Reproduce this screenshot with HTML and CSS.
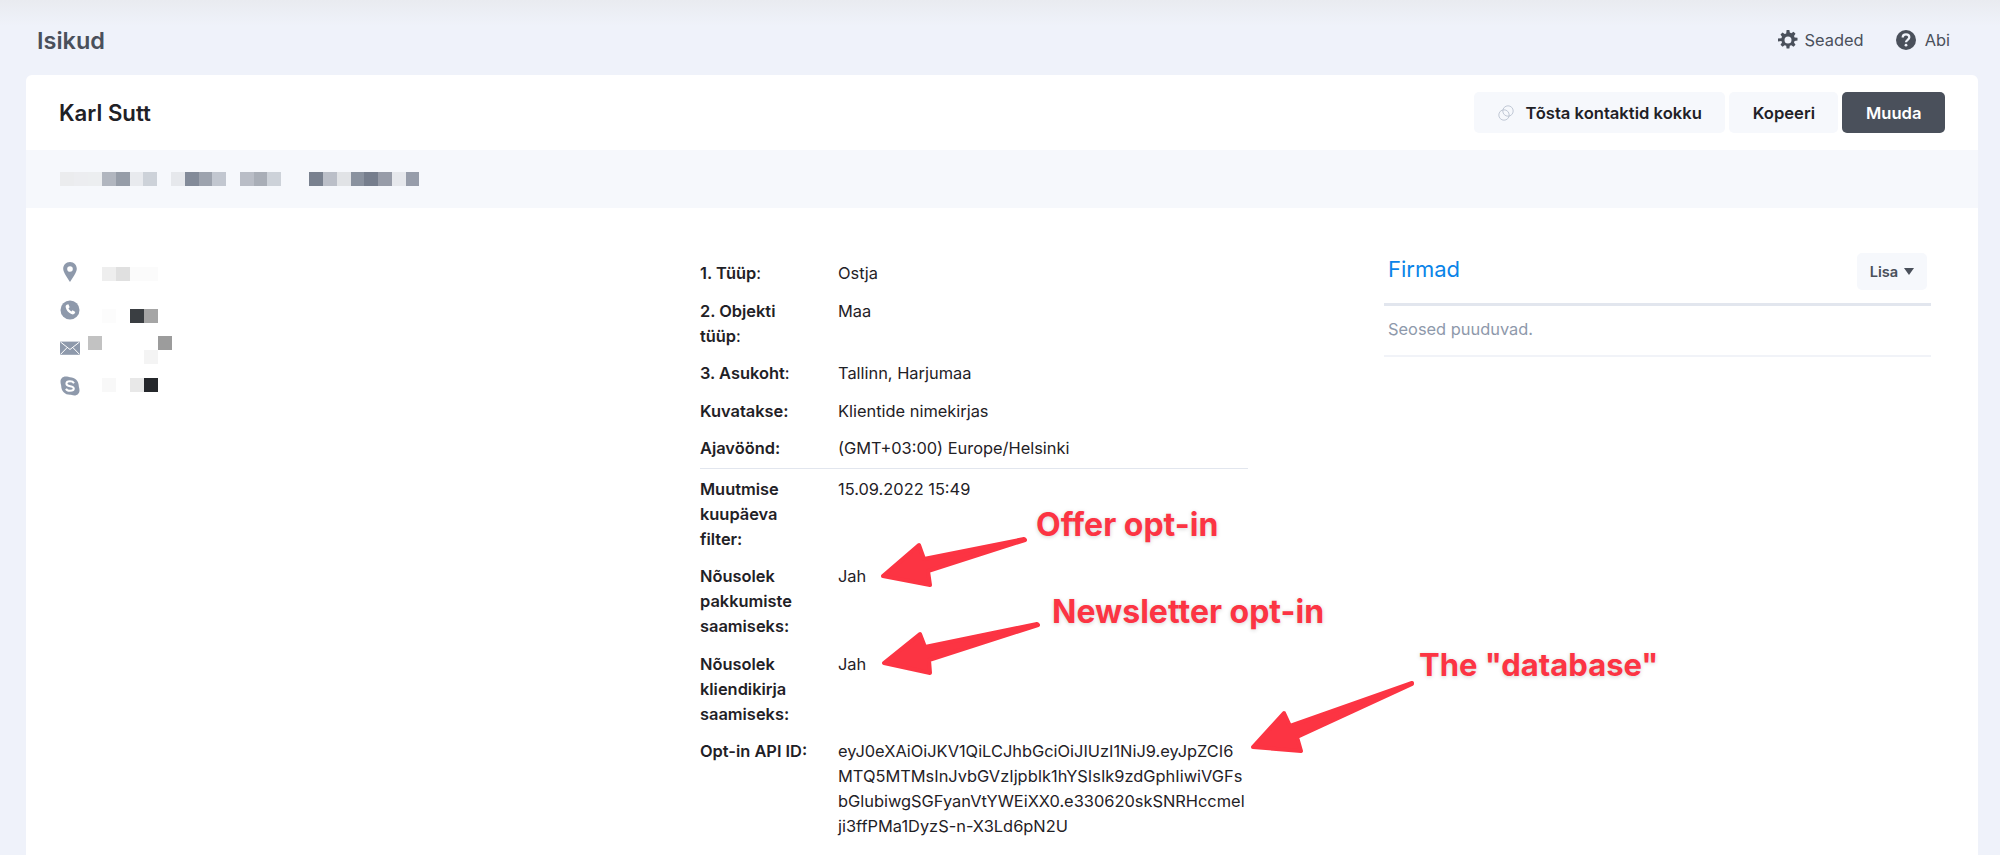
FILE: index.html
```html
<!DOCTYPE html>
<html lang="en">
<head>
    <meta charset="UTF-8">
    <meta name="viewport" content="width=device-width, initial-scale=1.0">
    <title>Isikud</title>
    <link rel="stylesheet" href="styles.css">
</head>
<body>
    <header class="topbar">
        <div class="page-title">Isikud</div>
        <nav class="top-links">
            <a class="top-link link-settings">
                <svg class="top-icon" viewBox="0 0 20 20"><path fill="#4a505b" fill-rule="evenodd" d="M8.600 0h2.800l.4 2.600 1.500.6 2.200-1.500 2 2-1.500 2.200.6 1.500 2.900.4v2.800l-2.900.4-.6 1.500 1.500 2.200-2 2-2.200-1.500-1.500.6-.4 2.700H8.600l-.4-2.700-1.500-.6-2.200 1.500-2-2 1.500-2.200-.6-1.500L0 11.400V8.600l3.400-.4.6-1.500-1.500-2.200 2-2 2.200 1.500 1.500-.6zM10 6.500a3.500 3.500 0 1 0 0 7 3.500 3.500 0 0 0 0-7z"/></svg>
                Seaded
            </a>
            <a class="top-link">
                <svg class="top-icon" viewBox="0 0 20 20"><circle cx="10" cy="10" r="10" fill="#4a505b"/><path fill="none" stroke="#eff2fa" stroke-width="2.300" d="M6.700 7.600c0-2 1.500-3.200 3.300-3.200s3.300 1.100 3.300 2.900c0 2.500-3.300 2.500-3.300 5"/><circle cx="10" cy="15.200" r="1.400" fill="#eff2fa"/></svg>
                Abi
            </a>
        </nav>
    </header>

    <main class="card">
        <div class="card-head">
            <h1>Karl Sutt</h1>
            <div class="actions">
                <button class="btn">
                    <svg class="merge-icon" viewBox="0 0 16 16"><g fill="none" stroke="#b4bccb" stroke-width="0.800"><circle cx="6" cy="10" r="5.200"/><circle cx="10" cy="6" r="5.200"/></g></svg>
                    Tõsta kontaktid kokku
                </button>
                <button class="btn">Kopeeri</button>
                <button class="btn btn-dark">Muuda</button>
            </div>
        </div>
        <div class="band">
            <svg class="band-blur" viewBox="0 0 360 14" shape-rendering="crispEdges">
                <rect x="0" width="14" height="14" fill="#ebecee"/>
                <rect x="14" width="14" height="14" fill="#ecedf0"/>
                <rect x="28" width="14" height="14" fill="#eceef0"/>
                <rect x="42" width="14" height="14" fill="#b1b6bf"/>
                <rect x="56" width="14" height="14" fill="#969da8"/>
                <rect x="70" width="13" height="14" fill="#e8eaee"/>
                <rect x="83" width="14" height="14" fill="#cdd2d9"/>
                <rect x="111" width="14" height="14" fill="#e6e8ec"/>
                <rect x="125" width="14" height="14" fill="#838b99"/>
                <rect x="139" width="13" height="14" fill="#9da3ae"/>
                <rect x="152" width="14" height="14" fill="#c2c7d0"/>
                <rect x="180" width="14" height="14" fill="#b9bdc6"/>
                <rect x="194" width="13" height="14" fill="#a9aeb7"/>
                <rect x="207" width="14" height="14" fill="#cdd2d9"/>
                <rect x="249" width="14" height="14" fill="#79818f"/>
                <rect x="263" width="14" height="14" fill="#bbbfc8"/>
                <rect x="277" width="14" height="14" fill="#e1e3e6"/>
                <rect x="291" width="13" height="14" fill="#8a929f"/>
                <rect x="304" width="14" height="14" fill="#767e8d"/>
                <rect x="318" width="14" height="14" fill="#979ca8"/>
                <rect x="332" width="14" height="14" fill="#e6e8ec"/>
                <rect x="346" width="13" height="14" fill="#979daa"/>
            </svg>
        </div>

        <div class="card-body">
            <section class="contact">
                <div class="contact-icons">
                    <svg class="contact-icon" viewBox="0 0 20 20"><path fill="#8e99ab" fill-rule="evenodd" d="M10 0C5.900 0 3.200 3 3.200 6.800 3.200 10.500 7.500 16 10 20c2.500-4 6.800-9.500 6.800-13.200C16.800 3 14.100 0 10 0zm0 4.200a2.800 2.800 0 1 1 0 5.600 2.800 2.800 0 0 1 0-5.600z"/></svg>
                    <svg class="contact-icon" viewBox="0 0 20 20"><circle cx="10" cy="10" r="9.500" fill="#8e99ab"/><path fill="#fff" d="M6.700 4.700l1.700-.5 1.300 3-1.200 1c.5 1.300 1.500 2.500 2.900 3.200l1.200-1.100 2.700 1.600-.7 1.700c-.6.900-2 1-3.300.4-3-1.300-5.100-3.800-5.600-6.700-.2-1.100.2-2 1-2.600z"/></svg>
                    <svg class="contact-icon" viewBox="0 0 20 20"><path fill="#8e99ab" d="M0 3.600h20v13.200H0z"/><path fill="none" stroke="#fff" stroke-width="1" d="M.5 4l9.500 7.500L19.500 4M.5 16.400l6.800-7M19.500 16.400l-6.800-7"/></svg>
                    <svg class="contact-icon" viewBox="0 0 20 20"><path fill="#8e99ab" d="M5.500 0.500C8 0.500 8.600 1.200 10 1.200c5 0 8.800 3.800 8.800 8.800 0 1.300.7 2.200.7 4.500 0 2.800-2.200 5-5 5-2.300 0-3.200-.7-4.500-.7-5 0-8.800-3.800-8.800-8.800C1.200 8.600.5 8 .5 5.500c0-2.800 2.200-5 5-5z"/><path fill="none" stroke="#fff" stroke-width="2" d="M14 7.200C13.200 5.800 11.800 5.300 10 5.300c-2 0-3.600.8-3.600 2.400 0 3.400 7.400 1.600 7.400 4.800 0 1.500-1.700 2.300-3.800 2.300-1.800 0-3.300-.7-4-2.100"/></svg>
                </div>
                <svg class="contact-blur" viewBox="0 0 84 126" shape-rendering="crispEdges">
                    <rect x="14" y="0" width="14" height="14" fill="#eeeeee"/>
                    <rect x="28" y="0" width="14" height="14" fill="#e0e0e0"/>
                    <rect x="42" y="0" width="28" height="14" fill="#fbfbfb"/>
                    <rect x="14" y="42" width="14" height="14" fill="#fcfcfc"/>
                    <rect x="42" y="42" width="14" height="14" fill="#3a3e42"/>
                    <rect x="56" y="42" width="14" height="14" fill="#a5a5a5"/>
                    <rect x="0" y="69" width="14" height="14" fill="#c2c2c2"/>
                    <rect x="70" y="69" width="14" height="14" fill="#9c9c9c"/>
                    <rect x="56" y="83" width="14" height="14" fill="#f4f4f4"/>
                    <rect x="14" y="111" width="14" height="14" fill="#f8f8f8"/>
                    <rect x="42" y="111" width="14" height="14" fill="#e8e8e8"/>
                    <rect x="56" y="111" width="14" height="14" fill="#25272b"/>
                </svg>
            </section>

            <section class="details">
                <div class="row"><div class="label">1. Tüüp<span class="colon">:</span></div><div class="value">Ostja</div></div>
                <div class="row"><div class="label">2. Objekti tüüp<span class="colon">:</span></div><div class="value">Maa</div></div>
                <div class="row"><div class="label">3. Asukoht<span class="colon">:</span></div><div class="value">Tallinn, Harjumaa</div></div>
                <div class="row"><div class="label">Kuvatakse:</div><div class="value">Klientide nimekirjas</div></div>
                <div class="row"><div class="label">Ajavöönd:</div><div class="value">(GMT+03:00) Europe/Helsinki</div></div>
                <div class="row row-split"><div class="label">Muutmise kuupäeva filter:</div><div class="value">15.09.2022 15:49</div></div>
                <div class="row"><div class="label">Nõusolek pakkumiste saamiseks:</div><div class="value">Jah</div></div>
                <div class="row"><div class="label">Nõusolek kliendikirja saamiseks:</div><div class="value">Jah</div></div>
                <div class="row"><div class="label">Opt-in API ID:</div><div class="value value-token">eyJ0eXAiOiJKV1QiLCJhbGciOiJIUzI1NiJ9.eyJpZCI6MTQ5MTMsInJvbGVzIjpbIk1hYSIsIk9zdGphIiwiVGFsbGlubiwgSGFyanVtYWEiXX0.e330620skSNRHccmelji3ffPMa1DyzS-n-X3Ld6pN2U</div></div>
            </section>

            <aside class="side">
                <div class="side-head">
                    <h2>Firmad</h2>
                    <button class="btn-small">Lisa <span class="caret"></span></button>
                </div>
                <p class="side-empty">Seosed puuduvad.</p>
            </aside>
        </div>
    </main>

    <!-- annotations on top of the screenshot -->
    <svg class="arrows" viewBox="0 0 2000 855">
        <path d="M883 576 L919 545 L924 559 L1024 539 L1025 540 L928 571 L930 585 Z"/>
        <path d="M884 663 L920 634 L925 647 L1037 624 L1038 625 L929 660 L930 673 Z"/>
        <path d="M1253 747 L1284 713 L1290 726 L1412 683 L1412 684 L1297 737 L1301 751 Z"/>
    </svg>
    <div class="note note-offer">Offer opt-in</div>
    <div class="note note-news">Newsletter opt-in</div>
    <div class="note note-db">The "database"</div>
</body>
</html>
```

FILE: styles.css
```css
html, body {
    margin: 0;
    padding: 0;
}
body {
    position: relative;
    height: 855px;
    overflow: hidden;
    background: linear-gradient(#e9ebf0, #eff2fa 26px);
    font-family: Inter, "Liberation Sans", sans-serif;
    font-size: 16.4px;
    color: #1f2126;
}
.topbar {
    height: 75px;
    padding: 0 50px 0 37px;
    display: flex;
    align-items: center;
    justify-content: space-between;
}
.page-title {
    font-size: 23.5px;
    font-weight: 600;
    color: #4a505b;
    margin-top: 6px;
}
.top-links {
    display: flex;
    gap: 32px;
    margin-top: 4px;
}
.top-link {
    display: flex;
    align-items: center;
    gap: 9px;
    color: #4a505b;
}
.link-settings {
    gap: 7px;
}
.top-icon {
    width: 20px;
    height: 20px;
}
.card {
    margin: 0 22px 0 26px;
    height: 780px;
    background: #fff;
    border-radius: 6px 6px 0 0;
}
.card-head {
    height: 75px;
    padding: 0 33px;
    display: flex;
    align-items: center;
    justify-content: space-between;
}
h1 {
    margin: 0;
    font-size: 22.2px;
    font-weight: 600;
}
.actions {
    display: flex;
    gap: 4px;
}
.btn {
    height: 41px;
    padding: 0 23.5px;
    display: flex;
    align-items: center;
    gap: 12px;
    border: 0;
    border-radius: 5px;
    background: #f6f8fc;
    font-family: inherit;
    font-size: 16.6px;
    font-weight: 600;
    color: #1f2126;
}
.btn-dark {
    background: #4a505b;
    color: #fff;
}
.merge-icon {
    width: 16px;
    height: 16px;
}
.band {
    height: 58px;
    padding-left: 34px;
    display: flex;
    align-items: center;
    background: #f6f8fc;
}
.band-blur {
    width: 360px;
    height: 14px;
}
.card-body {
    display: flex;
    padding-left: 34px;
}
.contact {
    width: 640px;
    flex-shrink: 0;
    padding-top: 54px;
    display: flex;
    align-items: flex-start;
}
.contact-icons {
    width: 28px;
    display: flex;
    flex-direction: column;
    gap: 18px;
}
.contact-icon {
    width: 20px;
    height: 20px;
}
.contact-blur {
    width: 84px;
    height: 126px;
    margin-top: 5px;
}
.details {
    width: 548px;
    padding-top: 47px;
    flex-shrink: 0;
    line-height: 25px;
}
.row {
    display: flex;
    padding: 6.25px 0;
}
.row-split {
    border-top: 1px solid #e2e6ee;
    padding-top: 8px;
}
.label {
    width: 138px;
    flex-shrink: 0;
    padding-right: 24px;
    box-sizing: border-box;
    font-weight: 600;
}
.colon {
    font-weight: 400;
}
.value {
    flex: 1;
}
.value-token {
    word-break: break-all;
}
.side {
    width: 547px;
    margin-left: 136px;
    padding-top: 45px;
}
.side-head {
    height: 50px;
    padding: 0 4px;
    display: flex;
    align-items: center;
    justify-content: space-between;
    border-bottom: 3px solid #e2e6ee;
}
h2 {
    margin: 0 0 19px;
    font-size: 22px;
    font-weight: 400;
    color: #0a84e8;
}
.btn-small {
    height: 37px;
    width: 70px;
    padding: 0;
    margin-top: -13px;
    display: flex;
    align-items: center;
    justify-content: center;
    gap: 6px;
    border: 0;
    border-radius: 5px;
    background: #f6f8fc;
    font-family: inherit;
    font-size: 14.6px;
    font-weight: 600;
    color: #4a505b;
}
.caret {
    width: 0;
    height: 0;
    border-left: 5px solid transparent;
    border-right: 5px solid transparent;
    border-top: 7px solid #4a505b;
}
.side-empty {
    margin: 0;
    padding: 11px 4px 13px;
    line-height: 25px;
    color: #8e99ab;
    border-bottom: 2px solid #f1f3f8;
}
.arrows {
    position: absolute;
    left: 0;
    top: 0;
    width: 2000px;
    height: 855px;
    fill: #fc3443;
    stroke: #fc3443;
    stroke-width: 4;
    stroke-linejoin: round;
}
.note {
    position: absolute;
    font-size: 32px;
    font-weight: 700;
    line-height: 36px;
    color: #fc3443;
    white-space: nowrap;
    text-shadow: 0 1px 4px rgba(0, 0, 0, 0.18);
}
.note-offer {
    left: 1036px;
    top: 507px;
}
.note-news {
    left: 1052px;
    top: 594px;
}
.note-db {
    left: 1419px;
    top: 647px;
    font-size: 31px;
}
```
